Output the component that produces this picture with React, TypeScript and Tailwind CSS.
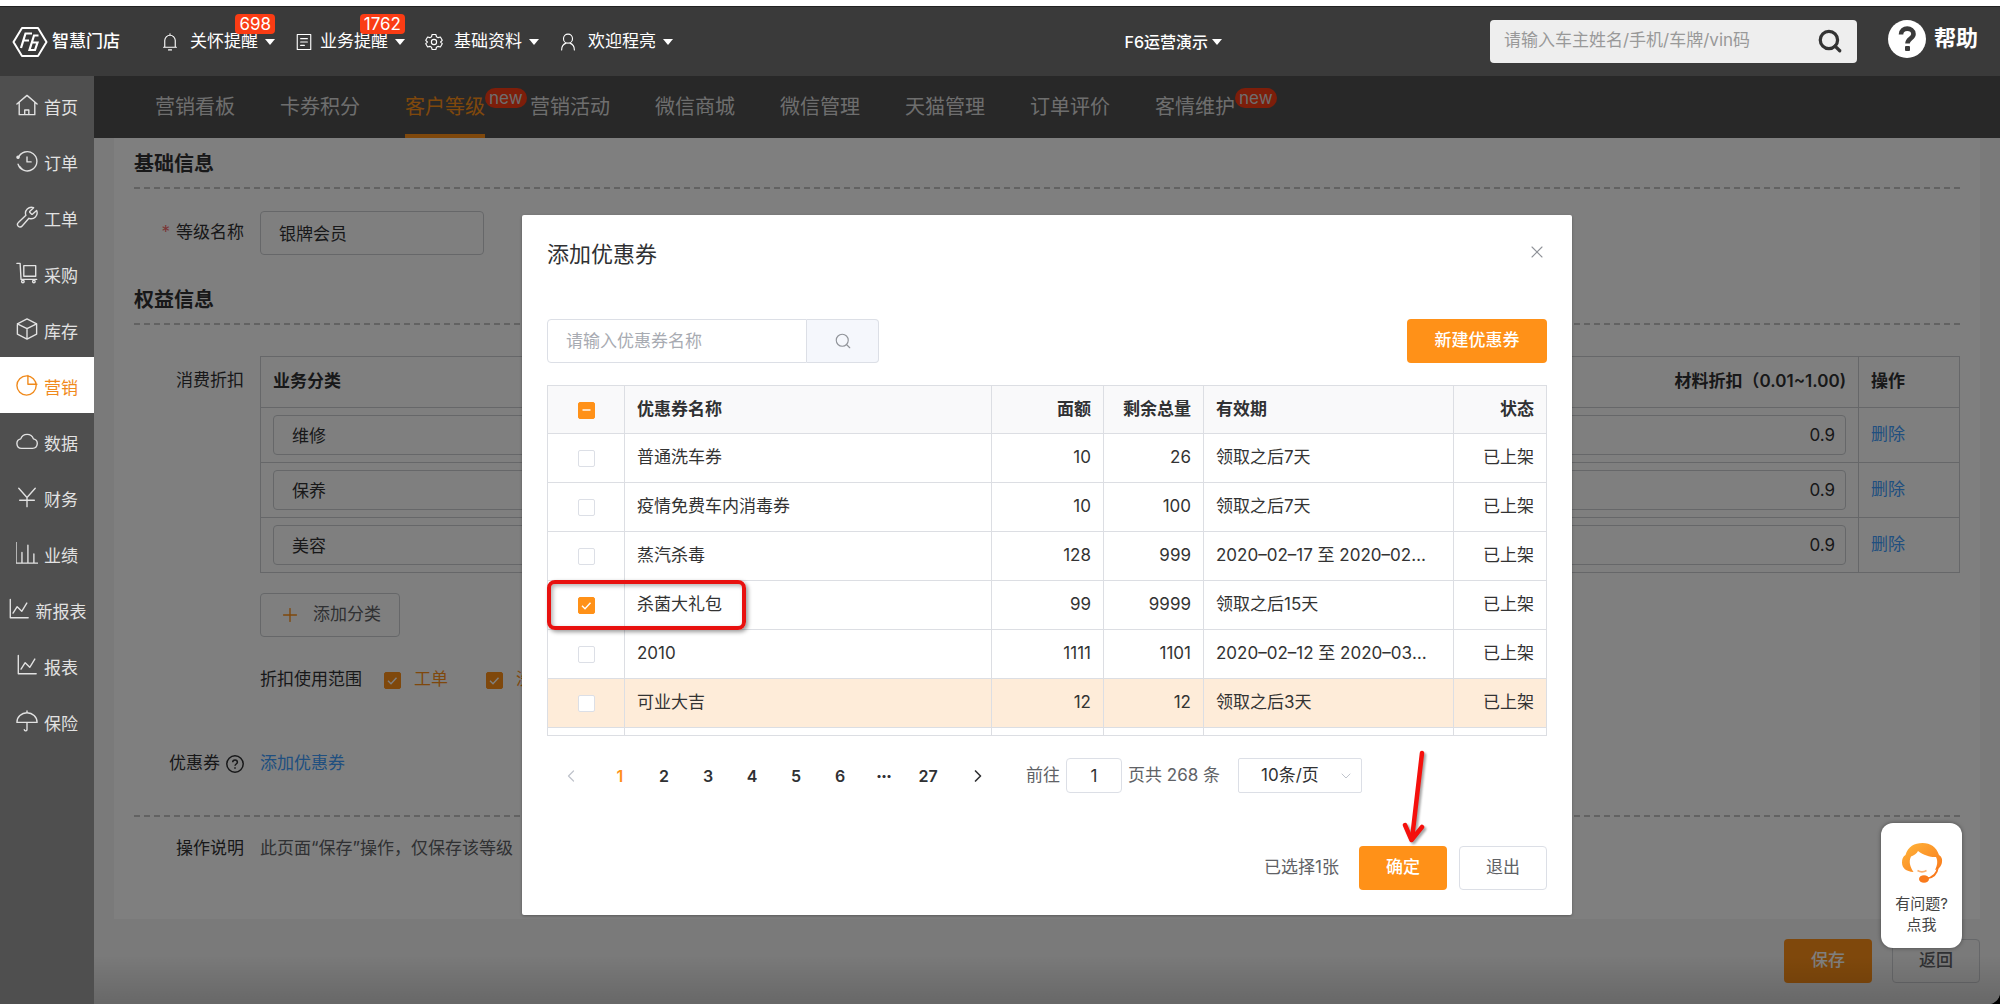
import { useState, type ReactNode } from "react";
import { ChevronDown, ChevronLeft, ChevronRight, Plus, Search, X } from "lucide-react";

const coupons = [
  { id: 1, name: "普通洗车券", value: 10, left: 26, period: "领取之后7天" },
  { id: 2, name: "疫情免费车内消毒券", value: 10, left: 100, period: "领取之后7天" },
  { id: 3, name: "蒸汽杀毒", value: 128, left: 999, period: "2020–02–17 至 2020–02–29" },
  { id: 4, name: "杀菌大礼包", value: 99, left: 9999, period: "领取之后15天", marked: true },
  { id: 5, name: "2010", value: 1111, left: 1101, period: "2020–02–12 至 2020–03–12" },
  { id: 6, name: "可业大吉", value: 12, left: 12, period: "领取之后3天", hover: true },
];

const tabs = [
  { label: "营销看板" },
  { label: "卡券积分" },
  { label: "客户等级", active: true, isNew: true },
  { label: "营销活动" },
  { label: "微信商城" },
  { label: "微信管理" },
  { label: "天猫管理" },
  { label: "订单评价" },
  { label: "客情维护", isNew: true },
];

function Icon({ children, className = "size-6" }: { children: ReactNode; className?: string }) {
  return (
    <svg
      viewBox="0 0 24 24"
      fill="none"
      stroke="currentColor"
      strokeWidth="1.5"
      strokeLinecap="round"
      strokeLinejoin="round"
      className={`shrink-0 ${className}`}
      aria-hidden="true"
    >
      {children}
    </svg>
  );
}

const lineChart = <path d="M2.5 1.5v20H22M5.5 16.500l4.500-7 5 5 5.500-9" />;

const menu: { label: string; icon: ReactNode; active?: boolean }[] = [
  { label: "首页", icon: <path d="M1 11 12 1.500 23 11M3.500 9v13.500h17V9M9.500 22.500v-5h4.500v5" /> },
  {
    label: "订单",
    icon: (
      <>
        <path d="M2.500 8.500a10.500 10.500 0 1 1-.2 7M4 18a10 10 0 0 0 2.500 2.500M12 7.500v5.500h4.500" />
        <circle cx="2.200" cy="8" r="1.200" fill="currentColor" />
      </>
    ),
  },
  {
    label: "工单",
    icon: (
      <path d="M15.200 5.800a1 1 0 0 0 0 1.400l1.600 1.600a1 1 0 0 0 1.400 0l4.300-4a6.500 6.500 0 0 1-8.400 8.600l-7.400 8.400a2.800 2.800 0 0 1-4.600-.2 2.800 2.800 0 0 1 .5-3.700l8.200-7.700a6.500 6.500 0 0 1 8.400-8.400z" />
    ),
  },
  {
    label: "采购",
    icon: (
      <>
        <path d="M1 1.500h3.500l1 17.500H22.500M8.500 4h13v11.500h-13z" />
        <circle cx="7.500" cy="21.300" r="1.400" />
        <circle cx="19.500" cy="21.300" r="1.400" />
      </>
    ),
  },
  { label: "库存", icon: <path d="M12 1 22.500 6.300v11.400L12 23 1.500 17.700V6.300zM1.500 6.300 12 11.500l10.500-5.200M12 11.500V23" /> },
  {
    label: "营销",
    active: true,
    icon: (
      <>
        <circle cx="11.500" cy="12.500" r="10.500" />
        <path d="M13 1.500v9.700h9.800" />
      </>
    ),
  },
  { label: "数据", icon: <path d="M6 20a5.200 5.200 0 0 1-.8-10.300 7.300 7.300 0 0 1 13.800 0A5.200 5.200 0 0 1 18 20z" /> },
  { label: "财务", icon: <path d="M3 2.500l9 10 9-10M12 12.500V22.500M4 15.500h16" /> },
  { label: "业绩", icon: <path d="M0 0v23h24M6.500 23V11.500M13 23V3.500M19.500 23v-10" /> },
  { label: "新报表", icon: lineChart },
  { label: "报表", icon: lineChart },
  { label: "保险", icon: <path d="M12 1V3M1 13.500a11 10.500 0 0 1 22 0zM12 13.500v7.500a1.500 1.500 0 0 1-3 .5" /> },
];

function Caret() {
  return <span className="border-x-5 border-t-6 border-x-transparent border-t-current" />;
}

function HeaderItem({ icon, label, badge }: { icon: ReactNode; label: string; badge?: number }) {
  return (
    <button type="button" className="relative flex items-center gap-[7px]">
      {icon}
      <span>{label}</span>
      <Caret />
      {badge && (
        <span className="absolute right-0 bottom-4 mb-1 rounded bg-[#fa3c14] px-1 text-[17px] leading-5">{badge}</span>
      )}
    </button>
  );
}

function Header() {
  return (
    <header className="flex h-[70px] items-center border-t border-[#222] bg-[#3a3a3a] pr-[22px] pl-3 text-[17px] text-white">
      <div className="flex flex-1 items-center">
        <a href="#home" className="mr-[41px] flex items-center gap-1 font-medium">
          <svg viewBox="0 0 36 32" fill="none" stroke="currentColor" className="h-8 w-9" aria-hidden="true">
            <path d="M10 2h16l8.500 14L26 30H10L1.500 16z" strokeWidth="2" strokeLinejoin="round" />
            <path d="M9 22l4.500-14.500H20M11.500 14.500H17" strokeWidth="2.200" />
            <path d="M26.500 9.500h-4.500L17.500 24h5.500l2.500-7.500h-5.500" strokeWidth="2.200" />
          </svg>
          智慧门店
        </a>
        <nav className="flex items-center gap-5">
          <HeaderItem
            label="关怀提醒"
            badge={698}
            icon={
              <Icon className="mr-1 size-[18px]">
                <path d="M5 19V10a7 7 0 0 1 14 0v9M3.500 19h17M12 1v2M10 22.500h4" />
              </Icon>
            }
          />
          <HeaderItem
            label="业务提醒"
            badge={1762}
            icon={
              <Icon className="size-[18px]">
                <path d="M3 2h18v20H3zM7.500 7.500h9M7.500 12h9M7.500 16.500h5" />
              </Icon>
            }
          />
          <HeaderItem
            label="基础资料"
            icon={
              <Icon className="mr-1 size-[18px]">
                <path d="M9.500 2h5l.8 3 2.200 1.200 3-.8 2.500 4.300-2.200 2.300 2.200 2.300-2.500 4.300-3-.8-2.200 1.200-.8 3h-5l-.8-3-2.200-1.200-3 .8L1 14.300 3.200 12 1 9.700l2.500-4.300 3 .8L8.700 5z" />
                <circle cx="12" cy="12" r="3.500" />
              </Icon>
            }
          />
          <HeaderItem
            label="欢迎程亮"
            icon={
              <Icon className="mr-1 size-[18px]">
                <circle cx="12" cy="7.500" r="6" />
                <path d="M3.500 22.500c0-5 3-8 6-9M20.500 22.500c0-5-3-8-6-9" />
              </Icon>
            }
          />
        </nav>
      </div>
      <button type="button" className="mr-[268px] flex items-center gap-1 text-base font-medium">
        F6运营演示
        <Caret />
      </button>
      <form className="flex h-[43px] w-[367px] items-center rounded bg-[#eee] pr-3.5 pb-0.5 pl-3.5">
        <input
          type="search"
          aria-label="搜索车主"
          placeholder="请输入车主姓名/手机/车牌/vin码"
          className="min-w-0 flex-1 text-[17px] text-[#333] outline-none placeholder:text-[#999]"
        />
        <button type="button" aria-label="搜索" className="text-[#333]">
          <Search className="size-[26px]" strokeWidth={3} />
        </button>
      </form>
      <a href="#help" className="ml-[31px] flex items-center gap-2 pb-1.5 text-[22px] font-bold">
        <svg viewBox="0 0 38 38" className="size-[38px]" aria-hidden="true">
          <circle cx="19" cy="19" r="19" fill="#fff" />
          <path d="M13 14.500c0-8 12.500-7.500 12.500-.5 0 4.500-6 4.500-6 9.500" fill="none" stroke="#3a3a3a" strokeWidth="4.600" />
          <rect x="17" y="26" width="5" height="5" rx="1" fill="#3a3a3a" />
        </svg>
        帮助
      </a>
    </header>
  );
}

function Sidebar() {
  return (
    <aside className="w-[94px] shrink-0 bg-[#4f4f4f] pt-px text-[17px] text-[#e2e2e2]">
      {menu.map((item) => (
        <a
          key={item.label}
          href="#menu"
          className={`flex h-14 items-center justify-center gap-1.5 ${item.active ? "bg-white text-[#f08a1c]" : ""}`}
        >
          <Icon className="size-[22px]">{item.icon}</Icon>
          <span className="pt-2">{item.label}</span>
        </a>
      ))}
    </aside>
  );
}

function Tabs() {
  return (
    <nav className="flex h-[62px] gap-[45px] bg-[#505050] pl-[61px] text-xl text-[#ddd]">
      {tabs.map((tab) => (
        <a
          key={tab.label}
          href="#tab"
          className={`relative flex items-center border-y-4 border-transparent ${
            tab.active ? "border-b-[#ff9118] text-[#ff9118]" : ""
          }`}
        >
          {tab.label}
          {tab.isNew && (
            <span className="absolute top-2 left-full rounded-full bg-[#fa3c14] px-1 text-[17px] leading-5 text-[#ddd]">
              new
            </span>
          )}
        </a>
      ))}
    </nav>
  );
}

function Checkbox({ label, checked = false, partial = false }: { label: string; checked?: boolean; partial?: boolean }) {
  const [on, setOn] = useState(checked);
  return (
    <span className="relative inline-flex align-middle">
      <input
        type="checkbox"
        aria-label={label}
        checked={on}
        onChange={() => setOn(!on)}
        className="size-[17px] appearance-none rounded-xs border border-[#dcdfe6] bg-white checked:border-[#ff9118] checked:bg-[#ff9118]"
      />
      {on && (
        <svg
          viewBox="0 0 17 17"
          fill="none"
          stroke="#fff"
          strokeWidth="1.400"
          className="pointer-events-none absolute inset-0"
          aria-hidden="true"
        >
          <path d={partial ? "M4.500 8h8" : "M4 8.800l3 3 5.500-6"} />
        </svg>
      )}
    </span>
  );
}

function Row({ label, className = "", children }: { label: ReactNode; className?: string; children: ReactNode }) {
  return (
    <div className={`flex gap-4 ${className}`}>
      <div className="flex h-11 w-[110px] shrink-0 items-center justify-end">{label}</div>
      <div className="min-w-0 flex-1">{children}</div>
    </div>
  );
}

function SectionTitle({ children }: { children: ReactNode }) {
  return (
    <h2 className="flex h-[51px] items-center border-b-2 border-dashed border-[#c4c4c4] pt-[3px] text-xl font-bold">
      {children}
    </h2>
  );
}

function LevelForm() {
  return (
    <section className="bg-white px-5 pb-12 text-[17px] text-[#303133]">
      <SectionTitle>基础信息</SectionTitle>
      <Row
        className="mt-[22px] mb-[19px]"
        label={
          <label htmlFor="level">
            <span className="mr-1.5 text-[#f56c6c]">*</span>等级名称
          </label>
        }
      >
        <input
          id="level"
          defaultValue="银牌会员"
          className="h-11 w-56 rounded border border-[#ccced2] px-[18px] pb-0.5 outline-none"
        />
      </Row>

      <SectionTitle>权益信息</SectionTitle>
      <Row className="mt-[31px]" label={<span className="pt-1.5">消费折扣</span>}>
        <table className="w-full table-fixed border-collapse border border-[#ccced2]">
          <thead>
            <tr className="h-[51px]">
              <th className="px-3 text-left font-bold">业务分类</th>
              <th className="px-3 text-right font-semibold">材料折扣（0.01~1.00)</th>
              <th className="w-[101px] border-l border-[#ccced2] px-3 text-left font-bold">操作</th>
            </tr>
          </thead>
          <tbody>
            {["维修", "保养", "美容"].map((name) => (
              <tr key={name} className="border-t border-[#ccced2]">
                <td className="px-3 py-[7px]">
                  <input
                    aria-label="业务分类"
                    defaultValue={name}
                    className="block h-10 w-full rounded border border-[#ccced2] px-[18px] pb-0.5 outline-none"
                  />
                </td>
                <td className="px-3 py-[7px]">
                  <input
                    aria-label="材料折扣"
                    defaultValue="0.9"
                    className="block h-10 w-full rounded border border-[#ccced2] px-2.5 text-right outline-none"
                  />
                </td>
                <td className="border-l border-[#ccced2] px-3">
                  <button type="button" className="text-[#409eff]">
                    删除
                  </button>
                </td>
              </tr>
            ))}
          </tbody>
        </table>
        <button
          type="button"
          className="mt-5 flex h-11 items-center gap-3 rounded border border-[#ccced2] px-[18px] text-[#606266]"
        >
          <Plus className="size-[22px] text-[#ff9118]" strokeWidth={1.5} />
          添加分类
        </button>
        <div className="mt-[21px] flex h-11 items-center gap-[38px]">
          <div className="flex items-center gap-[22px]">
            折扣使用范围
            <span className="flex items-center gap-[13px] text-[#ff9118]">
              <Checkbox label="工单" checked />
              工单
            </span>
          </div>
          <span className="flex items-center gap-[13px] text-[#ff9118]">
            <Checkbox label="洗车" checked />
            洗车
          </span>
        </div>
      </Row>

      <Row
        className="mt-10 border-b-2 border-dashed border-[#c4c4c4] pb-[29px]"
        label={
          <>
            优惠券
            <svg viewBox="0 0 18 18" fill="none" stroke="currentColor" strokeWidth="1.500" className="ml-1.5 size-[18px]" aria-hidden="true">
              <circle cx="9" cy="9" r="8.200" />
              <path d="M6.700 7.200c0-3 4.700-3 4.700 0 0 1.800-2.400 1.800-2.400 3.600M9 12.200v1.600" />
            </svg>
          </>
        }
      >
        <a href="#add" className="flex h-11 items-center text-[#409eff]">
          添加优惠券
        </a>
      </Row>
      <Row className="mt-2.5" label="操作说明">
        <p className="flex h-11 items-center text-[#606266]">此页面“保存”操作，仅保存该等级</p>
      </Row>
    </section>
  );
}

function CouponTable() {
  const cell = "border border-[#dcdee3] px-3";
  return (
    <div className="h-[351px] border-b border-[#dcdee3] [clip-path:inset(0_-4px_0_-4px)]">
      <table className="w-full table-fixed border-collapse text-[#333]">
        <colgroup>
          <col className="w-[77px]" />
          <col />
          <col className="w-28" />
          <col className="w-[100px]" />
          <col className="w-[250px]" />
          <col className="w-[93px]" />
        </colgroup>
        <thead>
          <tr className="h-12 bg-[#f9f9fa] text-[#303133]">
            <th className={`${cell} text-center`}>
              <Checkbox label="全选" checked partial />
            </th>
            <th className={`${cell} text-left font-bold`}>优惠券名称</th>
            <th className={`${cell} text-right font-bold`}>面额</th>
            <th className={`${cell} text-right font-bold`}>剩余总量</th>
            <th className={`${cell} text-left font-bold`}>有效期</th>
            <th className={`${cell} text-right font-bold`}>状态</th>
          </tr>
        </thead>
        <tbody>
          {coupons.map((row) => (
            <tr key={row.id} className={`h-[49px] ${row.hover ? "bg-[#feecd9]" : ""}`}>
              <td className={`${cell} relative text-center`}>
                <Checkbox label={row.name} checked={row.marked} />
                {row.marked && (
                  <span className="pointer-events-none absolute -inset-y-px -left-px z-10 w-[199px] rounded-lg border-4 border-[#e8110f] shadow-[2px_2px_4px_rgba(0,0,0,0.4),inset_2px_2px_4px_rgba(0,0,0,0.3)]" />
                )}
              </td>
              <td className={cell}>{row.name}</td>
              <td className={`${cell} text-right`}>{row.value}</td>
              <td className={`${cell} text-right`}>{row.left}</td>
              <td className="truncate border border-[#dcdee3] pr-[22px] pl-3">{row.period}</td>
              <td className={`${cell} text-right`}>已上架</td>
            </tr>
          ))}
          <tr className="h-[49px]">
            <td className={cell} />
            <td className={cell} />
            <td className={cell} />
            <td className={cell} />
            <td className={cell} />
            <td className={cell} />
          </tr>
        </tbody>
      </table>
    </div>
  );
}

function Pagination() {
  return (
    <div className="mt-[22px] flex items-center text-[17px] text-[#606266]">
      <button type="button" aria-label="上一页" className="flex w-[51px] justify-center pr-1 text-[#c0c4cc]">
        <ChevronLeft className="size-5" strokeWidth={1.5} />
      </button>
      {["1", "2", "3", "4", "5", "6", "•••", "27"].map((page) => (
        <button
          key={page}
          type="button"
          className={`w-11 font-semibold ${page === "1" ? "text-[#ff9118]" : "text-[#303133]"} ${
            page === "•••" ? "text-[10px]" : "text-base"
          }`}
        >
          {page}
        </button>
      ))}
      <button type="button" aria-label="下一页" className="flex w-14 justify-center text-[#303133]">
        <ChevronRight className="size-5" strokeWidth={2} />
      </button>
      <label className="ml-5 flex items-center gap-1.5">
        前往
        <input
          defaultValue="1"
          className="h-[35px] w-14 rounded border border-[#dcdfe6] text-center text-[#303133] outline-none"
        />
        页共 268 条
      </label>
      <div className="relative ml-[18px]">
        <select
          aria-label="每页条数"
          className="h-[35px] w-[124px] appearance-none rounded-xs border border-[#dcdfe6] pl-[22px] text-[#303133]"
        >
          <option>10条/页</option>
        </select>
        <ChevronDown className="pointer-events-none absolute top-2.5 right-2 size-4 text-[#c0c4cc]" strokeWidth={1.5} />
      </div>
    </div>
  );
}

function CouponDialog() {
  return (
    <div
      role="dialog"
      aria-label="添加优惠券"
      className="relative w-[1050px] rounded-xs bg-white px-[25px] pb-[25px] text-[17px] text-[#606266] shadow-[0_1px_3px_rgba(0,0,0,0.3)]"
    >
      <div className="flex h-[78px] items-center justify-between">
        <h1 className="text-[22px] text-[#303133]">添加优惠券</h1>
        <button type="button" aria-label="关闭" className="pb-1 text-[#909399]">
          <X className="size-5" strokeWidth={1.300} />
        </button>
      </div>

      <div className="mt-[26px] mb-[22px] flex justify-between">
        <div className="flex h-11">
          <input
            aria-label="优惠券名称"
            placeholder="请输入优惠券名称"
            className="w-[260px] rounded-l border border-[#dcdfe6] px-[18px] pt-0.5 outline-none placeholder:text-[#a8abb2]"
          />
          <button
            type="button"
            aria-label="搜索"
            className="flex w-[72px] items-center justify-center rounded-r border border-l-0 border-[#dcdfe6] bg-[#f5f7fc] text-[#909399]"
          >
            <Search className="size-[18px]" strokeWidth={1.500} />
          </button>
        </div>
        <button type="button" className="h-11 w-[140px] rounded bg-[#ff9118] font-medium text-white">
          新建优惠券
        </button>
      </div>

      <CouponTable />
      <Pagination />

      <div className="mt-[53px] flex items-center justify-end">
        <span className="mr-5">已选择1张</span>
        <button type="button" className="mr-3 h-11 w-[88px] rounded bg-[#ff9118] font-medium text-white">
          确定
        </button>
        <button type="button" className="h-11 w-[88px] rounded border border-[#dcdfe6]">
          退出
        </button>
      </div>

      {/* pointer to the confirm button */}
      <svg
        viewBox="0 0 30 100"
        fill="none"
        stroke="#f5100c"
        strokeWidth="4.500"
        strokeLinecap="round"
        strokeLinejoin="round"
        className="pointer-events-none absolute right-[142px] bottom-[70px] h-[100px] w-[30px] drop-shadow-[2px_2px_1px_rgba(0,0,0,0.35)]"
        aria-hidden="true"
      >
        <path d="M22 8 12 94" />
        <path d="M5 80l6.500 15L22 82" />
      </svg>
    </div>
  );
}

function ChatWidget() {
  return (
    <button
      type="button"
      className="absolute right-[38px] bottom-14 flex h-[125px] w-[81px] flex-col items-center justify-start rounded-xl bg-white pt-[18px] text-[15px] leading-[21px] text-[#444] shadow-[0_0_4px_rgba(0,0,0,0.4)]"
    >
      <svg viewBox="0 0 42 42" className="mb-2.5 size-[42px]" fill="none" aria-hidden="true">
        <defs>
          <linearGradient id="hair" x1="0" y1="0" x2="1" y2="1">
            <stop offset="0" stopColor="#ffb53a" />
            <stop offset="1" stopColor="#f97a1c" />
          </linearGradient>
        </defs>
        <path
          d="M4.500 14C7 5.500 13.500 2 21.500 2S35.500 6 38 14c2.500 1.500 3.500 4 3 7-.5 4-3 7-7 8 2.500-5 3-9 1-13-4.500.5-12-1.500-18-6-1 2.500-4 4.500-7 5.500-2.500 5-1 10 2.500 15.500C5 30.500 1 27 1 21.500c0-3.500 1-6 3.500-7.500z"
          fill="url(#hair)"
        />
        <path d="M16.500 29.500c3 1.800 6 1.800 9 0" stroke="#fbb070" strokeWidth="1.600" />
        <path d="M37 26c-1 7-5 11-12 11.500" stroke="#f97a1c" strokeWidth="1.800" />
        <ellipse cx="23" cy="38" rx="5" ry="3.800" fill="#f97a1c" />
      </svg>
      <span>有问题?</span>
      <span>点我</span>
    </button>
  );
}

export default function App() {
  return (
    <div className="flex min-h-screen flex-col bg-black font-[Inter,'Noto_Sans_CJK_SC',sans-serif]">
      <div className="h-1.5 bg-white" />
      <Header />
      <div className="flex flex-1">
        <Sidebar />
        <div className="relative min-w-0 flex-1 overflow-hidden rounded-br-xl bg-[#f4f4f4]">
          <Tabs />
          <main className="px-5">
            <LevelForm />
            <div className="flex justify-end gap-5 py-5 text-[17px]">
              <button type="button" className="h-11 w-[88px] rounded bg-[#ff9118] font-medium text-white">
                保存
              </button>
              <button type="button" className="h-11 w-[88px] rounded border border-[#ccced2] font-medium text-[#606266]">
                返回
              </button>
            </div>
          </main>
          <div className="absolute inset-x-0 bottom-0 h-12 bg-linear-to-b from-transparent to-black/15" />
          <div className="absolute inset-0 flex items-start justify-center bg-black/50 pt-[139px]">
            <CouponDialog />
          </div>
          <ChatWidget />
        </div>
      </div>
    </div>
  );
}
